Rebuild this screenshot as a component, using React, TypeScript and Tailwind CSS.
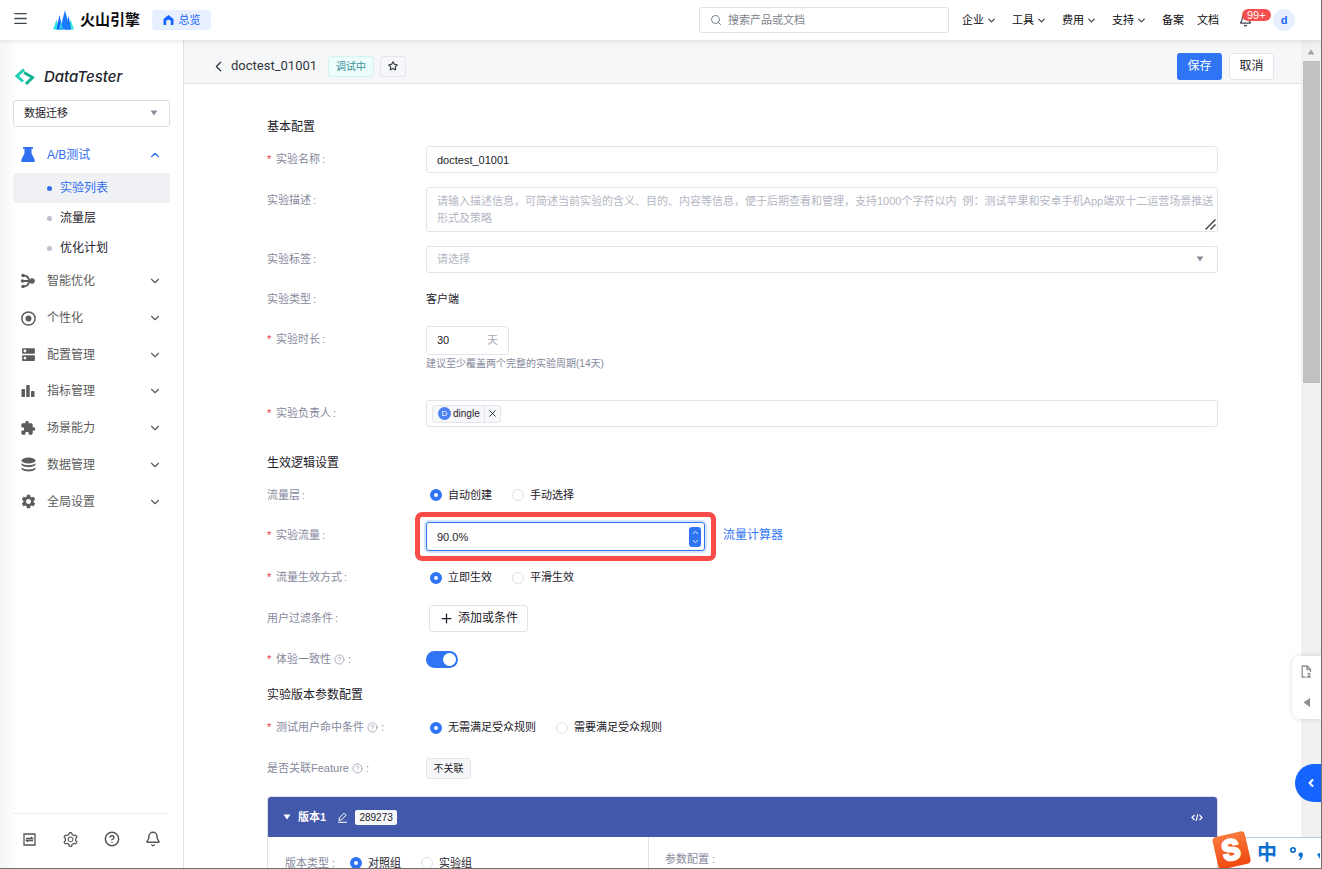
import type { ReactNode } from "react";
import {
  Bell,
  ChevronDown,
  ChevronLeft,
  ChevronUp,
  CircleHelp,
  Menu,
  Plus,
  Search,
  Star,
  X,
} from "lucide-react";
import { MdDns, MdExtension, MdSettings } from "react-icons/md";
import { AiOutlineSetting } from "react-icons/ai";

const topMenus = ["企业", "工具", "费用", "支持"];

const subItems = [
  { name: "实验列表", active: true },
  { name: "流量层", active: false },
  { name: "优化计划", active: false },
];

const sections = [
  { name: "智能优化", icon: <BranchIcon /> },
  { name: "个性化", icon: <TargetIcon /> },
  { name: "配置管理", icon: <MdDns size={17} /> },
  { name: "指标管理", icon: <BarsIcon /> },
  { name: "场景能力", icon: <MdExtension size={16} /> },
  { name: "数据管理", icon: <StackIcon /> },
  { name: "全局设置", icon: <MdSettings size={17} /> },
];

function BranchIcon() {
  return (
    <svg width="16" height="16" viewBox="0 0 16 16" fill="none" stroke="currentColor" strokeWidth="1.8">
      <path d="M3 2.5c3.500 0 6 2 6 5.500s-2.500 5.500-6 5.500M2 8h9" />
      <circle cx="3" cy="2.500" r="1.700" fill="currentColor" stroke="none" />
      <circle cx="2.500" cy="8" r="1.700" fill="currentColor" stroke="none" />
      <circle cx="3" cy="13.500" r="1.700" fill="currentColor" stroke="none" />
      <circle cx="12" cy="8" r="2.800" fill="currentColor" stroke="none" />
    </svg>
  );
}

function TargetIcon() {
  return (
    <svg width="15" height="15" viewBox="0 0 15 15" fill="none" stroke="currentColor" strokeWidth="1.500">
      <circle cx="7.500" cy="7.500" r="6.600" />
      <circle cx="7.500" cy="7.500" r="3" fill="currentColor" stroke="none" />
    </svg>
  );
}

function BarsIcon() {
  return (
    <svg width="14" height="14" viewBox="0 0 14 14" fill="currentColor">
      <rect x="0.500" y="5" width="3.500" height="8" rx="0.700" />
      <rect x="5.200" y="1" width="3.500" height="12" rx="0.700" />
      <rect x="10" y="7" width="3.500" height="6" rx="0.700" />
    </svg>
  );
}

function StackIcon() {
  return (
    <svg width="15" height="16" viewBox="0 0 15 16" fill="currentColor">
      <ellipse cx="7.500" cy="3.500" rx="7" ry="3" />
      <path d="M.5 6c1 1.500 4 2.200 7 2.200s6-.7 7-2.200v1.300c0 1.700-3.500 2.900-7 2.900s-7-1.200-7-2.900z" />
      <path d="M.5 10.200c1 1.500 4 2.200 7 2.200s6-.7 7-2.200v1.300c0 1.700-3.500 2.900-7 2.900s-7-1.200-7-2.900z" />
    </svg>
  );
}

function Caret({ className = "" }: { className?: string }) {
  return (
    <svg width="8" height="6" viewBox="0 0 8 6" className={className} fill="currentColor">
      <path d="M0.500 0.500h7L4 5.500z" />
    </svg>
  );
}

function Flask() {
  return (
    <svg width="14" height="15" viewBox="0 0 14 15" fill="currentColor">
      <path d="M2 0h10v1.800h-1.500v4.400l3.200 6.600c.5 1-.1 2.200-1.200 2.200h-11c-1.100 0-1.700-1.200-1.200-2.200l3.200-6.600V1.800H2z" />
    </svg>
  );
}

function Header() {
  return (
    <header className="relative z-10 flex h-10 shrink-0 items-center bg-white pr-[26px] pl-[12px] shadow-[0_1px_5px_rgba(0,0,0,0.12)]">
      <button aria-label="菜单" className="pb-[3px] text-[#41464f]">
        <Menu size={17} strokeWidth={1.8} />
      </button>
      <a href="#" className="ml-[24px] flex items-center gap-[6px]">
        <svg width="21" height="20" viewBox="0 0 21 20">
          <path d="M3.500 9.500 0 19.500h7zM17.500 9.500l-3.500 10h7z" fill="#32e5e0" />
          <path d="M6.500 5 3.500 19.500h6zM15.500 6 12 19.500h6z" fill="#1664ff" />
          <path d="m12 0-5 19.500h10z" fill="#1a7bff" />
          <path d="m8 11-2 8.500h4z" fill="#2fc8ee" />
        </svg>
        <span className="text-[15px] font-bold text-[#0c0d0e]">火山引擎</span>
      </a>
      <a href="#" className="ml-[12px] flex h-5 w-[59px] items-center justify-center gap-[5px] rounded bg-[#e8f0ff] text-[11px] text-[#1664ff]">
        <svg width="11" height="10" viewBox="0 0 11 10" fill="currentColor">
          <path d="M5.500 0 .5 4v5.200c0 .4.300.8.700.8h2V6.500c0-1 .8-1.700 2.300-1.700s2.300.7 2.300 1.700V10h2c.4 0 .7-.4.700-.8V4z" />
        </svg>
        总览
      </a>
      <label className="ml-auto flex h-[26px] w-[250px] items-center gap-[6px] rounded-[3px] border border-[#dde2e9] px-[10px]">
        <Search size={12} className="text-[#737a87]" />
        <input
          aria-label="搜索"
          placeholder="搜索产品或文档"
          className="min-w-0 flex-1 text-[11px] outline-none placeholder:text-[#80838a]"
        />
      </label>
      <nav className="ml-[13px] flex items-center gap-[15px] text-[11px] whitespace-nowrap text-[#0c0d0e]">
        {topMenus.map((name) => (
          <button key={name} className="flex w-[35px] items-center gap-[2px]">
            {name}
            <ChevronDown size={11} strokeWidth={2.8} className="shrink-0 text-[#41464f]" />
          </button>
        ))}
        <div className="flex gap-[13px]">
          <a href="#">备案</a>
          <a href="#">文档</a>
        </div>
      </nav>
      <button aria-label="消息" className="relative mr-[21px] ml-[20px] text-[#41464f]">
        <Bell size={13} strokeWidth={2.2} />
        <span className="absolute bottom-[6px] left-[3px] h-3 rounded-full bg-[#f54e4e] px-[5px] text-[11px] leading-3 text-white">
          99+
        </span>
      </button>
      <button className="h-[22px] w-[22px] rounded-full bg-[#e8f0ff] text-[11px] font-bold text-[#1664ff]">d</button>
    </header>
  );
}

function Sidebar() {
  return (
    <aside className="flex w-[184px] shrink-0 flex-col border-r border-[#dfe1e6] bg-linear-to-r from-[#f5f6f8] to-white to-10% px-[13px]">
      <div className="mt-[27px] flex h-5 items-center gap-[9px] pl-[2px]">
        <svg width="20" height="18" viewBox="0 0 20 18" fill="none" strokeWidth="3">
          <path d="M9 1.500 2 8l6 5.500" stroke="#1fd0b4" />
          <path d="m9 4.500 8.500 5-6.500 6.500" stroke="#12b394" />
        </svg>
        <span className="font-['Inter'] text-[15px] font-medium text-[#23252e] italic">DataTester</span>
      </div>

      <div className="relative mt-[13px]">
        <select
          aria-label="项目"
          className="h-[27px] w-full appearance-none rounded-[3px] border border-[#dcdee6] bg-white px-[10px] text-[11px] text-[#1d2129]"
        >
          <option>数据迁移</option>
        </select>
        <Caret className="pointer-events-none absolute top-[10px] right-[12px] text-[#86909c]" />
      </div>

      <nav className="mt-[13px] text-[12px]">
        <button className="flex h-[29px] w-full items-center px-[8px] text-[#2f6ff0]">
          <span className="flex w-[26px]">
            <Flask />
          </span>
          A/B测试
          <ChevronUp size={14} strokeWidth={2} className="ml-auto" />
        </button>
        <div className="mt-[4px]">
          {subItems.map((item) => (
            <a
              key={item.name}
              href="#"
              className={`flex h-[30px] items-center gap-[8px] rounded-[3px] pl-[34px] ${
                item.active ? "bg-[#f0f1f5] text-[#2f6ff0]" : "text-[#1d2129]"
              }`}
            >
              <span className={`h-[5px] w-[5px] rounded-full ${item.active ? "bg-[#2f6ff0]" : "bg-[#bcc1ce]"}`} />
              {item.name}
            </a>
          ))}
        </div>
        <div className="grid h-[257px] auto-rows-fr text-[#5c5c5c]">
          {sections.map((item) => (
            <button key={item.name} className="flex items-center pr-[8px] pl-[6px]">
              <span className="flex w-[18px] justify-center">{item.icon}</span>
              <span className="ml-[10px]">{item.name}</span>
              <ChevronDown size={14} strokeWidth={2} className="ml-auto" />
            </button>
          ))}
        </div>
      </nav>

      <div className="mt-auto mb-[4px] flex h-[51px] items-center gap-[25px] border-t border-[#ecedf0] pl-[8px] text-[#555]">
        <button aria-label="切换" className="flex w-4 justify-center">
          <svg width="13" height="13" viewBox="0 0 13 13" fill="none" stroke="currentColor" strokeWidth="1.300">
            <path d="M1 1h11v11H1zM3 5.500h6.500L8 4M10 7.500H3.500L5 9" />
          </svg>
        </button>
        <button aria-label="设置">
          <AiOutlineSetting size={17} />
        </button>
        <button aria-label="帮助">
          <CircleHelp size={16} strokeWidth={2.2} />
        </button>
        <button aria-label="通知">
          <Bell size={16} strokeWidth={2.2} />
        </button>
      </div>
    </aside>
  );
}

function PageBar() {
  return (
    <div className="flex h-11 shrink-0 items-center border-b border-[#dfe1e6] bg-[#f6f7f9] pt-[9px] pr-[27px] pl-[26px]">
      <button aria-label="返回" className="text-[#33363d]">
        <ChevronLeft size={17} strokeWidth={1.8} />
      </button>
      <h1 className="ml-[4px] font-['Roboto'] text-[13px] text-[#33363d]">doctest_01001</h1>
      <span className="ml-[11px] flex h-[21px] w-[46px] items-center justify-center rounded-[3px] border border-[#d3f3ed] bg-[#ecfdfc] text-[10px] text-[#3d8f97]">
        调试中
      </span>
      <button
        aria-label="收藏"
        className="ml-[6px] flex h-[21px] w-[26px] items-center justify-center rounded-[3px] border border-[#e4e6eb] bg-[#f6f7f9] text-[#33363d]"
      >
        <Star size={10} strokeWidth={2.8} />
      </button>
      <button className="ml-auto h-[27px] w-[45px] rounded-[3px] bg-[#2f74f4] text-[12px] text-white">保存</button>
      <button className="ml-[7px] h-[27px] w-[45px] rounded-[3px] border border-[#e4e6eb] bg-white text-[12px] text-[#1d2129]">
        取消
      </button>
    </div>
  );
}

function Row({
  label,
  required,
  help,
  htmlFor,
  height = "h-[27px]",
  align = "items-center",
  children,
}: {
  label: string;
  required?: boolean;
  help?: boolean;
  htmlFor?: string;
  height?: string;
  align?: string;
  children: ReactNode;
}) {
  return (
    <div className={`flex ${align} ${height}`}>
      <label htmlFor={htmlFor} className="flex h-[26px] w-[159px] shrink-0 items-center text-[#86899c]">
        {required && <span className="w-[9px] text-[#e5383f]">*</span>}
        {label}
        {help && <CircleHelp size={11} strokeWidth={2} className="mr-[1px] ml-[3px] text-[#a6a9b8]" />}
        <span className="ml-[2px]">:</span>
      </label>
      {children}
    </div>
  );
}

function Radios({ name, options }: { name: string; options: string[] }) {
  return (
    <div className="flex gap-[20px] pl-[4px] text-[#1d2129]">
      {options.map((option, i) => (
        <label key={option} className="flex items-center gap-[6px]">
          <input
            type="radio"
            name={name}
            defaultChecked={i === 0}
            className="h-3 w-3 appearance-none rounded-full border border-[#dfe1e8] bg-white checked:border-4 checked:border-[#2f74f4]"
          />
          {option}
        </label>
      ))}
    </div>
  );
}

function Title({ className, children }: { className: string; children: ReactNode }) {
  return <h2 className={`h-5 text-[12px] leading-[22px] text-[#1d2129] ${className}`}>{children}</h2>;
}

const field = "rounded-[3px] border border-[#e2e4ec] bg-white px-[10px] outline-none";

function Form() {
  return (
    <form className="min-h-0 flex-1 overflow-hidden px-[83px] pt-[32px] text-[11px]">
      <Title className="mb-[10px]">基本配置</Title>
      <div className="flex flex-col gap-[14px]">
        <Row label="实验名称" required htmlFor="name">
          <input id="name" defaultValue="doctest_01001" className={`h-full min-w-0 flex-1 text-[#1d2129] ${field}`} />
        </Row>
        <Row label="实验描述" htmlFor="desc" height="h-[45px]" align="items-start">
          <div className="relative h-full flex-1">
            <textarea
              id="desc"
              placeholder="请输入描述信息，可简述当前实验的含义、目的、内容等信息，便于后期查看和管理，支持1000个字符以内  例：测试苹果和安卓手机App端双十二运营场景推送形式及策略"
              className="block h-full w-full resize-none rounded-[3px] border border-[#e2e4ec] py-[5px] pl-[10px] leading-[17px] outline-none placeholder:text-[#b4b7c4]"
            />
            <svg width="11" height="11" viewBox="0 0 11 11" className="absolute right-[2px] bottom-[2px]" stroke="#4a4a4a" strokeWidth="1.500">
              <path d="M0.500 10.500 10.500 0.500M5.500 10.500l5-5" />
            </svg>
          </div>
        </Row>
        <Row label="实验标签" htmlFor="tags">
          <div className="relative h-full flex-1">
            <select id="tags" className={`h-full w-full appearance-none text-[#b4b7c4] ${field}`}>
              <option>请选择</option>
            </select>
            <Caret className="pointer-events-none absolute top-[10px] right-[14px] text-[#86909c]" />
          </div>
        </Row>
        <Row label="实验类型" height="h-[25px]">
          <span className="text-[#1d2129]">客户端</span>
        </Row>
        <Row label="实验时长" required htmlFor="days" height="h-[47px]" align="items-start">
          <div>
            <div className={`flex h-[29px] w-[83px] items-center ${field}`}>
              <input id="days" defaultValue="30" className="w-[50px] text-[#1d2129] outline-none" />
              <span className="text-[#a6a9b8]">天</span>
            </div>
            <p className="text-[10px] leading-[18px] text-[#86899c]">建议至少覆盖两个完整的实验周期(14天)</p>
          </div>
        </Row>
      </div>

      <div className="mt-[27px]">
        <Row label="实验负责人" required>
          <div className="flex h-full flex-1 items-center rounded-[3px] border border-[#e2e4ec] px-[5px]">
            <span className="flex h-[18px] items-center rounded-[3px] border border-[#e4e6eb] bg-[#f6f7f9] text-[10px] text-[#1d2129]">
              <span className="mr-[2px] ml-[5px] flex h-[13px] w-[13px] items-center justify-center rounded-full bg-[#4c80f1] text-[8px] text-white">
                D
              </span>
              dingle
              <button
                type="button"
                aria-label="移除"
                className="ml-[4px] flex h-full w-4 items-center justify-center border-l border-[#e4e6eb]"
              >
                <X size={11} strokeWidth={2} />
              </button>
            </span>
          </div>
        </Row>
      </div>

      <Title className="mt-[25px] mb-[10px]">生效逻辑设置</Title>
      <div className="flex flex-col gap-[14px]">
        <Row label="流量层" height="h-[26px]">
          <Radios name="layer" options={["自动创建", "手动选择"]} />
        </Row>
        <Row label="实验流量" required htmlFor="traffic" height="h-[29px]" align="items-start">
          <div className="relative h-full w-[279px]">
            <input
              id="traffic"
              defaultValue="90.0%"
              className="h-full w-full rounded-[3px] border border-[#2f74f4] px-[10px] text-[#1d2129] shadow-[0_0_0_2px_#d5e3fd] outline-none"
            />
            <div className="absolute top-[5px] right-[4px] flex h-5 w-3 flex-col items-center justify-between rounded-[3px] bg-[#2f74f4] py-[1px] text-white">
              <button type="button" aria-label="增加">
                <ChevronUp size={9} strokeWidth={2.4} />
              </button>
              <button type="button" aria-label="减少">
                <ChevronDown size={9} strokeWidth={2.4} />
              </button>
            </div>
            <div className="pointer-events-none absolute -inset-x-[11px] -inset-y-[10px] rounded-[7px] border-5 border-[#f94b48]" />
          </div>
          <a href="#" className="ml-[18px] text-[12px] leading-[27px] text-[#2f74f4]">
            流量计算器
          </a>
        </Row>
        <Row label="流量生效方式" required height="h-[25px]">
          <Radios name="effect" options={["立即生效", "平滑生效"]} />
        </Row>
        <Row label="用户过滤条件" height="h-[28px]">
          <button
            type="button"
            className="ml-[3px] flex h-[27px] w-[99px] items-center justify-center gap-[4px] rounded-[3px] border border-[#e0e2e8] text-[12px] text-[#1d2129]"
          >
            <Plus size={15} strokeWidth={2} />
            添加或条件
          </button>
        </Row>
        <Row label="体验一致性" required help htmlFor="consistent">
          <span className="relative h-[17px] w-8">
            <input
              id="consistent"
              type="checkbox"
              role="switch"
              defaultChecked
              className="peer block h-full w-full appearance-none rounded-full bg-[#c9cdd4] checked:bg-[#2f74f4]"
            />
            <span className="pointer-events-none absolute top-[2px] left-[2px] h-[13px] w-[13px] rounded-full bg-white peer-checked:left-[17px]" />
          </span>
        </Row>
      </div>

      <Title className="mt-[11px] mb-[10px]">实验版本参数配置</Title>
      <div className="flex flex-col gap-[14px]">
        <Row label="测试用户命中条件" required help>
          <Radios name="audience" options={["无需满足受众规则", "需要满足受众规则"]} />
        </Row>
        <Row label="是否关联Feature" help>
          <span className="flex h-[21px] w-[45px] items-center justify-center rounded-[3px] border border-[#e4e6eb] bg-[#f6f7f9] text-[10px] text-[#1d2129]">
            不关联
          </span>
        </Row>

        <section className="rounded-t-[4px] border border-[#dfe1e6]">
          <div className="flex h-10 items-center rounded-t-[3px] bg-[#4259ab] pr-[14px] pl-[15px] text-white">
            <Caret />
            <h3 className="ml-[7px] text-[11px] font-bold">版本1</h3>
            <button type="button" aria-label="编辑" className="ml-[11px]">
              <svg width="11" height="11" viewBox="0 0 11 11" fill="none" stroke="currentColor">
                <path d="M2 8.500 2.300 6 7 1.200l2 2L4.400 8zM1 10.300h9" />
              </svg>
            </button>
            <span className="ml-[7px] flex h-[15px] w-[42px] items-center justify-center rounded-[2px] bg-[#f6f7f9] text-[10px] text-[#1d2129]">
              289273
            </span>
            <button type="button" aria-label="代码" className="ml-auto">
              <svg width="12" height="9" viewBox="0 0 12 9" fill="none" stroke="currentColor" strokeWidth="1.200">
                <path d="M3.500 2 1 4.500 3.500 7M8.500 2 11 4.500 8.500 7M6.800 1.200 5.200 7.800" />
              </svg>
            </button>
          </div>
          <div className="flex h-20">
            <div className="flex w-[381px] items-start border-r border-[#dfe1e6] pt-[18px] pl-[17px]">
              <span className="w-[61px] leading-[17px] text-[#86899c]">版本类型 :</span>
              <Radios name="version" options={["对照组", "实验组"]} />
            </div>
            <div className="pt-[14px] pl-[16px] leading-[17px] text-[#86899c]">参数配置 :</div>
          </div>
        </section>
      </div>
    </form>
  );
}

function Scrollbar() {
  return (
    <div className="flex w-5 shrink-0 flex-col items-center bg-[#f1f1f1] pt-[9px]">
      <Caret className="rotate-180 text-[#a3a3a3]" />
      <div className="mt-[6px] h-[322px] w-[17px] bg-[#c1c1c1]" />
    </div>
  );
}

function FloatingTools() {
  return (
    <>
      <div className="absolute right-0 bottom-[149px] flex h-[63px] w-[29px] flex-col items-center gap-[20px] rounded-l-[8px] bg-white pt-[9px] text-[#8f8f8f] shadow-[0_0_5px_rgba(0,0,0,0.15)]">
        <button aria-label="文档">
          <svg width="11" height="13" viewBox="0 0 11 13" fill="none" stroke="currentColor" strokeWidth="1.300">
            <path d="M4.500 12H1.200V1h5l3.300 3.200V7M6 1v3.500h3.500M6.500 9c1.500-1.500 3 0 2 1L6.500 12h3.500" />
          </svg>
        </button>
        <button aria-label="展开">
          <svg width="7" height="9" viewBox="0 0 7 9" fill="currentColor">
            <path d="M7 0v9L0.500 4.500z" />
          </svg>
        </button>
      </div>
      <button
        aria-label="收起"
        className="absolute right-0 bottom-[66px] flex h-[38px] w-[26px] items-center justify-center rounded-l-full bg-[#1664ff] pl-[6px] text-white"
      >
        <ChevronLeft size={12} strokeWidth={4} />
      </button>
    </>
  );
}

function ImeTray() {
  return (
    <div className="absolute -right-px bottom-0 z-20 flex h-[31px] w-[103px] items-center border-t border-[#b4cbe6] bg-white text-[#0b6fd0]">
      <svg width="40" height="38" viewBox="0 0 40 38" className="-mt-[7px] -ml-[8px] shrink-0">
        <defs>
          <linearGradient id="ime" x1="0" y1="0" x2="0" y2="1">
            <stop offset="0" stopColor="#f87a3d" />
            <stop offset="1" stopColor="#f0480f" />
          </linearGradient>
        </defs>
        <g transform="rotate(-13 20 19)">
          <rect x="4" y="3" width="33" height="33" rx="4" fill="url(#ime)" />
          <text
            x="20"
            y="29"
            textAnchor="middle"
            fill="white"
            stroke="white"
            strokeWidth="2"
            fontSize="28"
            fontWeight="700"
            fontFamily="Inter, sans-serif"
          >
            S
          </text>
        </g>
      </svg>
      <span className="ml-[6px] text-[20px] leading-[30px] font-bold">中</span>
      <svg width="34" height="16" viewBox="0 0 34 16" className="ml-[11px] shrink-0" fill="currentColor">
        <circle cx="5" cy="5" r="2.200" fill="none" stroke="currentColor" strokeWidth="1.700" />
        <path d="M10.500 9.500a2.200 2.200 0 1 1 4.300.8c-.2 2.200-1.400 3.900-3.100 4.900l-.7-.9c.9-.6 1.500-1.500 1.600-2.300-1.200 0-2.100-1-2.100-2.500z" />
        <path d="M29 9l3 5V8z" />
      </svg>
    </div>
  );
}

export default function App() {
  return (
    <div className="relative flex h-screen flex-col overflow-hidden border-r border-b border-[#707070] bg-white font-['Liberation_Sans','Noto_Sans_CJK_SC',sans-serif]">
      <Header />
      <div className="flex min-h-0 flex-1">
        <Sidebar />
        <main className="flex min-w-0 flex-1 flex-col">
          <PageBar />
          <Form />
        </main>
        <Scrollbar />
      </div>
      <FloatingTools />
      <ImeTray />
    </div>
  );
}
